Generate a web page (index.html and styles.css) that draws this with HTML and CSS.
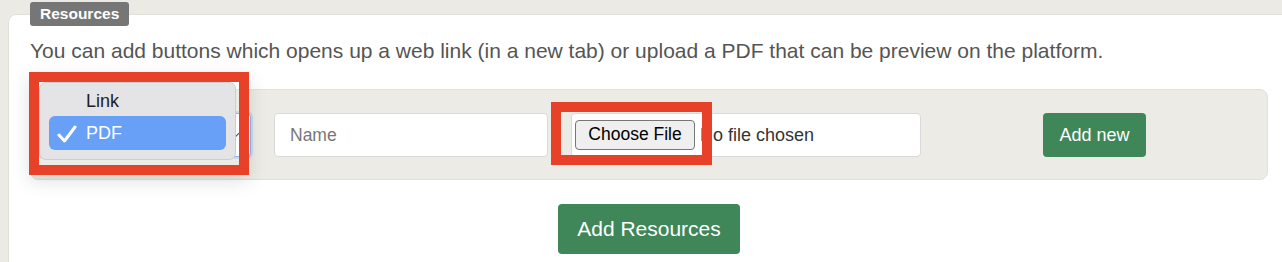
FILE: index.html
```html
<!DOCTYPE html>
<html>
<head>
<title>Resources</title>
<link rel="stylesheet" href="styles.css">
</head>
<body>
  <fieldset class="card">
    <legend class="badge">Resources</legend>
    <p class="intro">You can add buttons which opens up a web link (in a new tab) or upload a PDF that can be preview on the platform.</p>

    <div class="panel">
      <div class="row">
        <div class="select-wrap">
          <div class="select">PDF <span class="chevron"></span></div>
          <div class="menu">
            <div class="menu-item">Link</div>
            <div class="menu-item active">
              <svg class="check" width="20" height="18" viewBox="0 0 20 18">
                <path d="M2 10 L7.5 16 L18 2" fill="none" stroke="#fff" stroke-width="3" stroke-linecap="round" stroke-linejoin="round"/>
              </svg>
              PDF
            </div>
          </div>
          <div class="mark mark-menu"></div>
        </div>

        <input class="field" type="text" placeholder="Name">

        <label class="field file-field">
          <span class="file-btn">Choose File</span>
          <span class="file-name">No file chosen</span>
          <span class="mark mark-file"></span>
        </label>

        <div class="add-cell">
          <button class="btn btn-small">Add new</button>
        </div>
      </div>
    </div>

    <div class="actions">
      <button class="btn btn-large">Add Resources</button>
    </div>
  </fieldset>
</body>
</html>
```

FILE: styles.css
```css
html, body {
  margin: 0;
  overflow: hidden;
}
body {
  font-family: "Liberation Sans", Arial, sans-serif;
  background-color: #ebeae5;
  padding: 2px 0 0 8px;
}
.card {
  margin: 0;
  min-height: 300px;
  background-color: #ffffff;
  border: 1px solid #e0dfda;
  border-right: none;
  border-radius: 8px 0 0 0;
  padding: 0 14px 20px 21px;
}
.badge {
  background-color: #767676;
  color: #ffffff;
  font-weight: bold;
  font-size: 15.5px;
  line-height: 24px;
  padding: 0 10px;
  border-radius: 3px;
}
.intro {
  margin: 11px 0 24px 0;
  font-size: 21px;
  line-height: 28px;
  color: #555555;
}
.panel {
  background-color: #ecebe6;
  border: 1px solid #e2e0db;
  border-radius: 8px;
  padding: 23px 22px 22px 9px;
}
.row {
  display: grid;
  grid-template-columns: 211px 274px 350px 1fr;
  column-gap: 23px;
  align-items: center;
}
.select-wrap {
  position: relative;
}
.select {
  box-sizing: border-box;
  height: 44px;
  border: 1px solid #8db6ea;
  border-radius: 4px;
  background-color: #ffffff;
  box-shadow: 0 0 0 2px rgba(120, 165, 230, 0.25);
  display: flex;
  align-items: center;
  justify-content: space-between;
  padding: 0 12px;
  font-size: 16px;
  color: #333333;
}
.chevron {
  width: 6px;
  height: 6px;
  border-right: 1.5px solid #444;
  border-bottom: 1.5px solid #444;
  transform: rotate(45deg);
  margin-top: -3px;
}
.menu {
  position: absolute;
  left: -1px;
  top: -31px;
  width: 197px;
  height: 78px;
  box-sizing: border-box;
  background-color: #e4e4e6;
  border: 1px solid #cdcdcf;
  border-radius: 7px;
  padding: 3px 9px;
  z-index: 2;
}
.menu-item {
  height: 30px;
  display: flex;
  align-items: center;
  padding-left: 37px;
  font-size: 18px;
  color: #222222;
  position: relative;
}
.menu-item.active {
  height: 34px;
  background-color: #67a0f6;
  border-radius: 6px;
  color: #ffffff;
}
.check {
  position: absolute;
  left: 8px;
  top: 9px;
}
.mark {
  position: absolute;
  border: 10px solid #e8412a;
  z-index: 3;
}
.mark-menu {
  left: -11px;
  top: -41px;
  width: 200px;
  height: 83px;
  box-shadow: 0 6px 18px rgba(0, 0, 0, 0.12);
}
.mark-file {
  left: -21px;
  top: -12px;
  width: 141px;
  height: 43px;
}
.field {
  box-sizing: border-box;
  height: 44px;
  width: 100%;
  border: 1px solid #d9d9d9;
  border-radius: 4px;
  background-color: #ffffff;
  font-family: inherit;
  font-size: 17.5px;
  padding: 0 15px;
  color: #333333;
}
.field::placeholder {
  color: #777777;
}
.file-field {
  position: relative;
  display: flex;
  align-items: center;
  padding: 0 3px;
  gap: 5px;
}
.file-btn {
  box-sizing: border-box;
  height: 30px;
  width: 120px;
  display: flex;
  align-items: center;
  justify-content: center;
  background-color: #efefef;
  border: 1px solid #767676;
  border-radius: 4px;
  font-size: 17.5px;
  color: #000000;
  margin-top: -1px;
}
.file-name {
  font-size: 18px;
  color: #333333;
}
.add-cell {
  display: flex;
  justify-content: center;
}
.btn {
  font-family: inherit;
  background-color: #3f8658;
  color: #ffffff;
  border: none;
  border-radius: 4px;
  cursor: pointer;
}
.btn-small {
  height: 44px;
  padding: 0 16px;
  font-size: 18px;
}
.btn-large {
  height: 50px;
  padding: 0 19px;
  font-size: 21px;
}
.actions {
  display: flex;
  justify-content: center;
  margin-top: 24px;
}
```
